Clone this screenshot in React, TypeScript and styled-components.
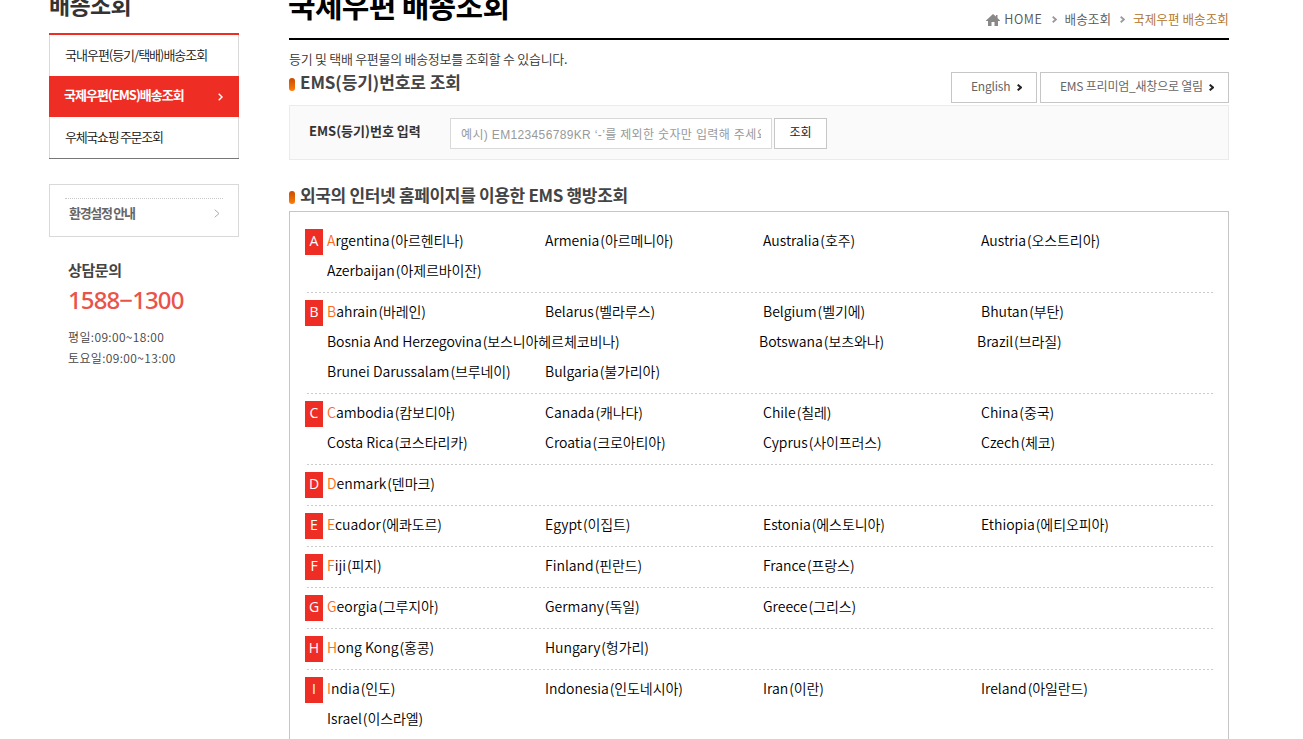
import React from 'react';
import styled, { createGlobalStyle } from 'styled-components';

const Global = createGlobalStyle`
  * { box-sizing: border-box; }
  html, body { margin: 0; padding: 0; background: #fff; overflow: hidden; }
  body { font-family: 'Noto Sans CJK KR', 'Noto Sans', sans-serif; font-size: 14px; color: #000; }
  ul, h1, h2, p { margin: 0; padding: 0; list-style: none; }
  a { color: inherit; text-decoration: none; }
`;

const Page = styled.div`
  width: 1303px; height: 739px; overflow: hidden;
  display: flex; align-items: flex-start; padding-left: 49px; white-space: nowrap;
`;
const Side = styled.aside`width: 190px; flex: none; margin-right: 50px;`;
const SideTitle = styled.h2`
  height: 33px; line-height: 8px; font-size: 23px; font-weight: 700; color: #333; letter-spacing: -0.7px;
`;
const Menu = styled.ul`border-top: 2px solid #ee2e24; border-bottom: 1px solid #777;`;
const MenuItem = styled.li<{ $on?: boolean; $ls: number }>`
  height: 41px; padding: 0 ${p => (p.$on ? 15 : 16)}px ${p => (p.$on ? 3 : 2)}px ${p => (p.$on ? 14 : 15)}px;
  display: flex; align-items: center; justify-content: space-between;
  font-size: 13px; line-height: 38px; letter-spacing: ${p => p.$ls}px;
  border: solid ${p => (p.$on ? '#ee2e24' : '#d9d9d9')}; border-width: 0 1px;
  background: ${p => (p.$on ? '#ee2e24' : '#fff')};
  color: ${p => (p.$on ? '#fff' : '#111')};
  font-weight: ${p => (p.$on ? 700 : 350)};
  svg { margin-top: 3px; }
`;
const Setting = styled.div`
  margin-top: 25px; height: 53px; border: 1px solid #d9d9d9; padding: 13px 15px 0;
`;
const SettingLink = styled.a`
  display: flex; justify-content: space-between; align-items: center;
  border-top: 1px dotted #c8c8c8; height: 28px; padding: 0 3px 0 4px;
  font-size: 13px; line-height: 26px; font-weight: 700; color: #666; letter-spacing: -1.3px;
  svg { margin-top: 2px; }
`;
const Contact = styled.div`padding: 22px 0 0 19px;`;
const ContactTitle = styled.p`font-size: 15px; line-height: 22px; font-weight: 700; color: #444; letter-spacing: -0.4px;`;
const Phone = styled.p`
  font-family: 'Noto Sans', sans-serif; font-size: 24px; line-height: 37px; font-weight: 500; color: #ea5349; letter-spacing: -0.9px;
`;
const Hours = styled.p`padding-top: 8px; font-size: 12px; line-height: 21px; font-weight: 350; color: #444; letter-spacing: 0.37px;`;

const Main = styled.main`width: 940px; flex: none;`;
const Head = styled.header`
  height: 40px; border-bottom: 2px solid #000; display: flex; justify-content: space-between;
`;
const Title = styled.h1`font-size: 30px; line-height: 9px; font-weight: 700; letter-spacing: -0.7px; margin-left: -1px;`;
const Crumbs = styled.nav`display: flex; align-items: center; height: 36px; font-size: 12.600px; color: #555;`;
const Crumb = styled.a<{ $now?: boolean; $ls?: number }>`
  color: ${p => (p.$now ? '#b0701c' : '#555')}; font-weight: 350; letter-spacing: ${p => p.$ls ?? 0.05}px;
`;
const CrumbSep = styled.span`display: flex; padding: 3px 8px 0 9px;`;
const HomeIcon = styled.svg`margin: 4px 4px 0 0;`;

const Intro = styled.p`height: 32px; line-height: 38px; font-size: 13px; font-weight: 350; color: #333; letter-spacing: -0.29px;`;
const SectionRow = styled.div`height: 33px; display: flex; justify-content: space-between;`;
const SectionTitle = styled.h2<{ $ls?: number }>`
  display: flex; align-items: center; gap: 5px; height: 22px; letter-spacing: ${p => p.$ls ?? 0}px;
  font-size: 17px; line-height: 22px; font-weight: 700; color: #444;
  span { margin-top: -2px; }
`;
const Bullet = styled.i`
  width: 6px; height: 13px; margin-top: 3px; border-radius: 3px; background: linear-gradient(#c94a05, #ff7d05);
`;
const Links = styled.div`display: flex; gap: 3px;`;
const LinkButton = styled.a<{ $w: number }>`
  width: ${p => p.$w}px; height: 31px; display: flex; align-items: center; justify-content: space-between; padding: 0 14px 3px 19px;
  border: 1px solid #c6c6c6; background: #fff; font-size: 12px; color: #666; letter-spacing: -0.22px; line-height: 26px;
  svg { margin-top: 3px; }
`;
const Search = styled.form`
  height: 55px; border: 1px solid #ebebeb; background: #fafafa;
  display: flex; padding: 12px 0 0 19px;
`;
const SearchLabel = styled.label`width: 141px; font-size: 13px; line-height: 26px; font-weight: 700; color: #333;`;
const SearchInput = styled.input`
  width: 322px; height: 31px; border: 1px solid #d9d9d9; padding: 2px 10px 0; outline: 0; background: #fff;
  font: 12px 'Liberation Sans', 'Noto Sans CJK KR', sans-serif; letter-spacing: 0.35px;
  &::placeholder { color: #999; opacity: 1; }
`;
const SearchButton = styled.button`
  width: 53px; height: 31px; margin-left: 2px; padding: 0 0 4px; border: 1px solid #c6c6c6; background: #fff;
  font: 12px 'Noto Sans CJK KR', sans-serif; color: #222;
`;
const ListTitle = styled(SectionTitle)`margin-top: 25px; height: 26px; span { margin-top: -6px; } i { margin-top: -1px; }`;
const Panel = styled.section`border: 1px solid #c6c6c6; padding: 10px 15px 0; height: 600px;`;
const Group = styled.div`
  display: flex; padding: 4px 0 6px;
  border-bottom: 1px solid transparent;
  background: repeating-linear-gradient(90deg, #ccc 0 2px, transparent 2px 4px) 2px 100% / 100% 1px no-repeat border-box;
`;
const Badge = styled.span`
  width: 18px; height: 26px; margin: 3px 4px 0 0; flex: none; background: #ee2e24; color: #fff;
  font: 500 14px/24px 'Open Sans', sans-serif; text-align: center;
`;
const Countries = styled.ul`display: flex; flex-wrap: wrap; width: 884px;`;
const Country = styled.li<{ $wide?: boolean }>`
  width: ${p => (p.$wide ? 432 : 218)}px; height: 30px; line-height: 28px; font-size: 14px; font-weight: 350;
  letter-spacing: ${p => (p.$wide ? -0.06 : 0)}px;
  &:first-child::first-letter { color: #ff6a1a; }
`;
const Korean = styled.span`margin-left: 1px; letter-spacing: -0.1px;`;

const Chevron = ({ color, w = 5, h = 8, sw = 1.4 }: { color: string; w?: number; h?: number; sw?: number }) => (
  <svg width={w} height={h} viewBox={`0 0 ${w} ${h}`} fill="none" stroke={color} strokeWidth={sw}>
    <path d={`M.7.7 L${w - 1} ${h / 2} L.7 ${h - 0.7}`} />
  </svg>
);

const groups: [string, string[]][] = [
  ['A', ['Argentina(아르헨티나)', 'Armenia(아르메니아)', 'Australia(호주)', 'Austria(오스트리아)', 'Azerbaijan(아제르바이잔)']],
  ['B', ['Bahrain(바레인)', 'Belarus(벨라루스)', 'Belgium(벨기에)', 'Bhutan(부탄)', 'Bosnia And Herzegovina(보스니아헤르체코비나)', 'Botswana(보츠와나)', 'Brazil(브라질)', 'Brunei Darussalam(브루네이)', 'Bulgaria(불가리아)']],
  ['C', ['Cambodia(캄보디아)', 'Canada(캐나다)', 'Chile(칠레)', 'China(중국)', 'Costa Rica(코스타리카)', 'Croatia(크로아티아)', 'Cyprus(사이프러스)', 'Czech(체코)']],
  ['D', ['Denmark(덴마크)']],
  ['E', ['Ecuador(에콰도르)', 'Egypt(이집트)', 'Estonia(에스토니아)', 'Ethiopia(에티오피아)']],
  ['F', ['Fiji(피지)', 'Finland(핀란드)', 'France(프랑스)']],
  ['G', ['Georgia(그루지아)', 'Germany(독일)', 'Greece(그리스)']],
  ['H', ['Hong Kong(홍콩)', 'Hungary(헝가리)']],
  ['I', ['India(인도)', 'Indonesia(인도네시아)', 'Iran(이란)', 'Ireland(아일란드)', 'Israel(이스라엘)']],
];

export default function App() {
  return (
    <Page>
      <Global />
      <Side>
        <SideTitle>배송조회</SideTitle>
        <Menu>
          <MenuItem $ls={-1}>국내우편(등기/택배)배송조회</MenuItem>
          <MenuItem $on $ls={-1}>국제우편(EMS)배송조회<Chevron color="#fff" /></MenuItem>
          <MenuItem $ls={-1.3}>우체국쇼핑 주문조회</MenuItem>
        </Menu>
        <Setting>
          <SettingLink>환경설정 안내<Chevron color="#aaa" w={6} h={9} sw={1} /></SettingLink>
        </Setting>
        <Contact>
          <ContactTitle>상담문의</ContactTitle>
          <Phone>1588−1300</Phone>
          <Hours>평일:09:00~18:00<br />토요일:09:00~13:00</Hours>
        </Contact>
      </Side>
      <Main>
        <Head>
          <Title>국제우편 배송조회</Title>
          <Crumbs>
            <HomeIcon width="14" height="12" viewBox="0 0 14 12" fill="#888"><path d="M7 0L0 6.500V7h2v5h3.500V8h3v4H12V7h2v-.5L11.500 4V1H10v1.600z" /></HomeIcon>
            <Crumb $ls={0.6}>HOME</Crumb>
            <CrumbSep><Chevron color="#999" h={7} sw={1.8} /></CrumbSep>
            <Crumb>배송조회</Crumb>
            <CrumbSep><Chevron color="#999" h={7} sw={1.8} /></CrumbSep>
            <Crumb $now>국제우편 배송조회</Crumb>
          </Crumbs>
        </Head>
        <Intro>등기 및 택배 우편물의 배송정보를 조회할 수 있습니다.</Intro>
        <SectionRow>
          <SectionTitle $ls={-0.07}><Bullet /><span>EMS(등기)번호로 조회</span></SectionTitle>
          <Links>
            <LinkButton $w={86}>English<Chevron color="#222" h={7} sw={2} /></LinkButton>
            <LinkButton $w={189}>EMS 프리미엄_새창으로 열림<Chevron color="#222" h={7} sw={2} /></LinkButton>
          </Links>
        </SectionRow>
        <Search>
          <SearchLabel>EMS(등기)번호 입력</SearchLabel>
          <SearchInput placeholder="예시) EM123456789KR ‘-’를 제외한 숫자만 입력해 주세요" />
          <SearchButton type="button">조회</SearchButton>
        </Search>
        <ListTitle $ls={-0.33}><Bullet /><span>외국의 인터넷 홈페이지를 이용한 EMS 행방조회</span></ListTitle>
        <Panel>
          {groups.map(([letter, names]) => (
            <Group key={letter}>
              <Badge>{letter}</Badge>
              <Countries>
                {names.map(n => {
                  const [en, ko] = n.split('(');
                  return <Country key={n} $wide={n.startsWith('Bosnia')}>{en}<Korean>({ko}</Korean></Country>;
                })}
              </Countries>
            </Group>
          ))}
        </Panel>
      </Main>
    </Page>
  );
}
